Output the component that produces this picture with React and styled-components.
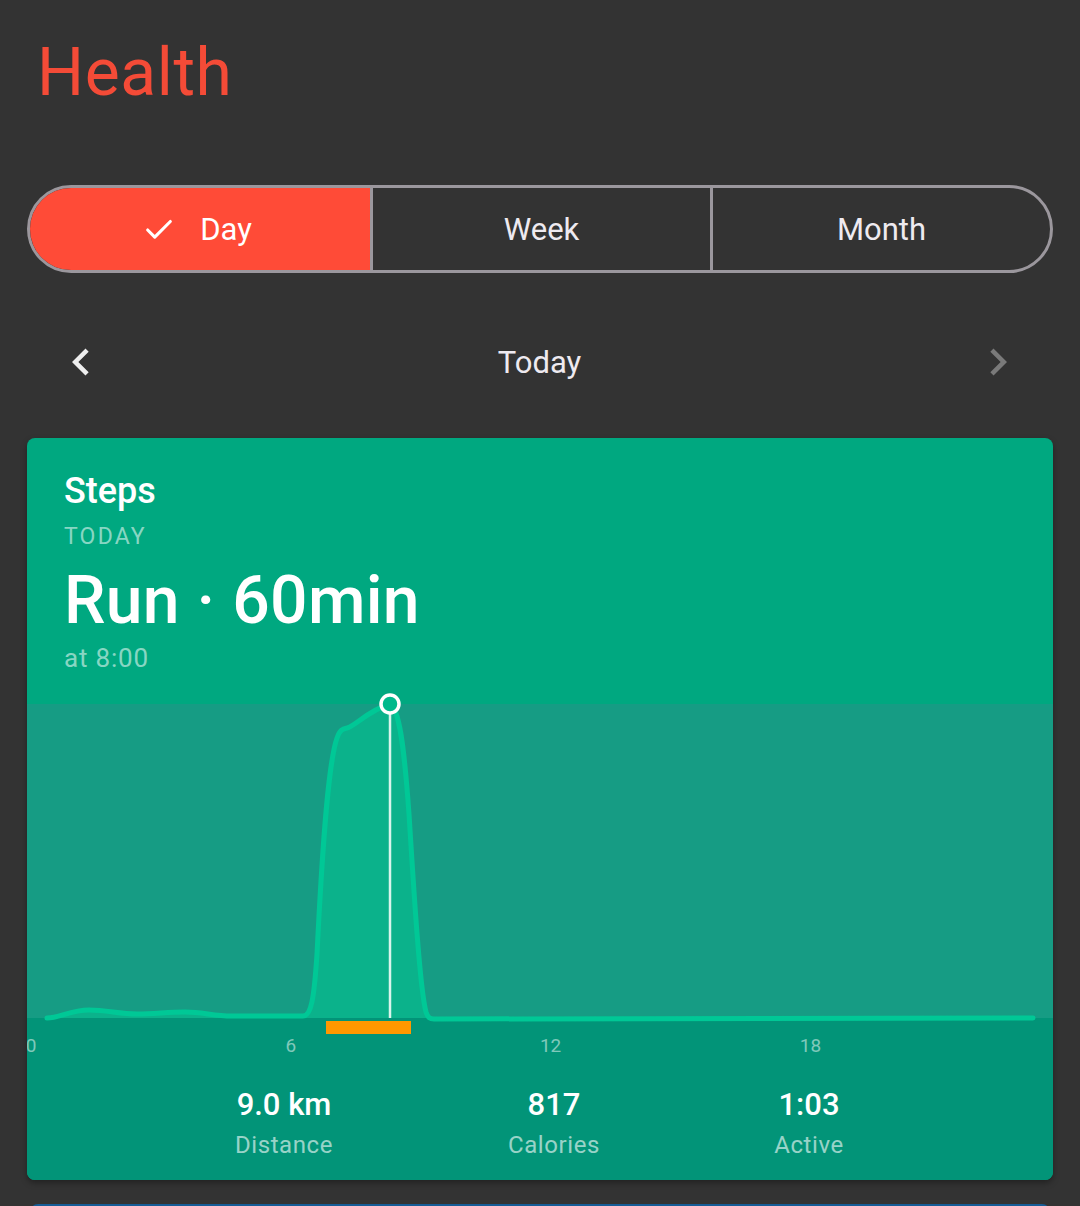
import React, { useState } from 'react'
import styled, { createGlobalStyle } from 'styled-components'
import { Check } from 'lucide-react'

const GlobalStyle = createGlobalStyle`
    body {
        margin: 0;
        background: #333333;
        font-family: Roboto, "Noto Sans", sans-serif;
        color: #eeeeee;
    }
`

const ranges = ['Day', 'Week', 'Month']
const hours = [0, 6, 12, 18]
const stats = [
    { value: '9.0 km', label: 'Distance' },
    { value: '817', label: 'Calories' },
    { value: '1:03', label: 'Active' },
]

// chart path in local chart coords (card width 1026, chart height 314)
const curve =
    'M20,314 C32,314 44,306 62,306 C80,306 92,310 110,310 C128,310 140,308 158,308 ' +
    'C176,308 186,312 205,312 L276,312 C284,312 287,296 290,250 C294,170 300,62 310,34 ' +
    'C313,26 315,25 320,24 C328,22 342,6 363,0 C372,4 377,40 382,110 ' +
    'C387,190 393,286 399,308 C401,314 403,315 407,315 L1006,314'

function Chevron({ dir, color }) {
    return (
        <svg width='54' height='54' viewBox='0 0 24 24'>
            <path
                fill={color}
                d={dir === 'left'
                    ? 'M15.41 7.41L14 6l-6 6 6 6 1.41-1.41L10.83 12z'
                    : 'M8.59 16.59L10 18l6-6-6-6-1.41 1.41L13.17 12z'}
            />
        </svg>
    )
}

function App() {
    const [active, setActive] = useState('Day')

    return (
        <Page>
            <GlobalStyle />
            <Title>Health</Title>
            <Segmented>
                {ranges.map((r) => (
                    <Segment key={r} $active={active === r} onClick={() => setActive(r)}>
                        {active === r && <Check size={34} strokeWidth={2.2} />}
                        <span>{r}</span>
                    </Segment>
                ))}
            </Segmented>
            <DateNav>
                <NavButton><Chevron dir='left' color='#eeeeee' /></NavButton>
                <DateLabel>Today</DateLabel>
                <NavButton><Chevron dir='right' color='#7a7a7a' /></NavButton>
            </DateNav>

            <Card>
                <CardHead>
                    <CardTitle>Steps</CardTitle>
                    <Overline>TODAY</Overline>
                    <Headline>Run · 60min</Headline>
                    <Sub>at 8:00</Sub>
                </CardHead>
                <ChartArea>
                    <svg width='1026' height='314' viewBox='0 0 1026 314' overflow='visible'>
                        <path d={curve + ' L20,314 Z'} fill='#0bb28b' />
                        <path d={curve} fill='none' stroke='#00c896' strokeWidth='5' strokeLinecap='round' />
                        <rect x='299' y='317' width='85' height='13' fill='#ff9800' />
                        <line x1='363' y1='8' x2='363' y2='314' stroke='#d8f5ec' strokeWidth='2.5' />
                        <circle cx='363' cy='0' r='9' fill='#00b98c' stroke='#ffffff' strokeWidth='3.5' />
                    </svg>
                </ChartArea>
                <Bottom>
                    <Axis>
                        {hours.map((h) => (
                            <Tick key={h} style={{ left: 4 + h * 43.3 }}>{h}</Tick>
                        ))}
                    </Axis>
                    <Stats>
                        {stats.map((s) => (
                            <Stat key={s.label}>
                                <StatValue>{s.value}</StatValue>
                                <StatLabel>{s.label}</StatLabel>
                            </Stat>
                        ))}
                    </Stats>
                </Bottom>
            </Card>
            <NextCard />
        </Page>
    )
}

const Page = styled.div`
    padding: 41px 27px 0;
    overflow: hidden;
`

const Title = styled.h1`
    margin: 0 0 0 10px;
    font-size: 66px;
    line-height: 64px;
    font-weight: 400;
    letter-spacing: 0.6px;
    color: #f44b37;
`

const Segmented = styled.div`
    margin-top: 80px;
    height: 88px;
    box-sizing: border-box;
    border: 3px solid #9b979d;
    border-radius: 44px;
    overflow: hidden;
    display: grid;
    grid-template-columns: 1fr 1fr 1fr;
`

const Segment = styled.button`
    border: none;
    border-left: 3px solid #9b979d;
    background: ${(p) => (p.$active ? '#ff4b37' : 'transparent')};
    color: ${(p) => (p.$active ? '#ffffff' : '#eeeaf0')};
    font-family: inherit;
    font-size: 31px;
    display: flex;
    align-items: center;
    justify-content: center;
    gap: 24px;
    padding: 0;
    cursor: pointer;
    &:first-child {
        border-left: none;
        padding-right: 6px;
    }
    svg {
        margin-top: 2px;
    }
`

const DateNav = styled.div`
    margin-top: 44px;
    height: 90px;
    display: grid;
    grid-template-columns: 54px 1fr 54px;
    align-items: center;
    padding: 0 28px 0 27px;
`

const NavButton = styled.div`
    display: flex;
    align-items: center;
    justify-content: center;
`

const DateLabel = styled.div`
    text-align: center;
    font-size: 31px;
    color: #eeeaf0;
`

const Card = styled.div`
    margin-top: 31px;
    border-radius: 8px;
    overflow: hidden;
    background: #00a880;
    box-shadow: 0 3px 6px rgba(0, 0, 0, 0.35);
`

const CardHead = styled.div`
    padding: 35px 37px 33px;
    display: flex;
    flex-direction: column;
    color: #ffffff;
`

const CardTitle = styled.div`
    font-size: 36px;
    line-height: 36px;
    font-weight: 500;
`

const Overline = styled.div`
    margin-top: 16px;
    font-size: 23px;
    line-height: 24px;
    letter-spacing: 2.2px;
    color: rgba(255, 255, 255, 0.55);
`

const Headline = styled.div`
    margin-top: 20px;
    font-size: 66px;
    line-height: 64px;
    font-weight: 500;
    letter-spacing: 0.3px;
`

const Sub = styled.div`
    margin-top: 12px;
    font-size: 26px;
    line-height: 26px;
    letter-spacing: 0.8px;
    color: rgba(255, 255, 255, 0.55);
`

const ChartArea = styled.div`
    height: 314px;
    background: #169c84;
    position: relative;
    z-index: 1;
    svg {
        display: block;
    }
`

const Bottom = styled.div`
    background: #029478;
    padding-bottom: 23px;
`

const Axis = styled.div`
    position: relative;
    height: 38px;
`

const Tick = styled.span`
    position: absolute;
    top: 18px;
    transform: translateX(-50%);
    font-size: 19px;
    line-height: 20px;
    color: rgba(255, 255, 255, 0.5);
`

const Stats = styled.div`
    margin-top: 33px;
    padding-left: 126px;
    display: grid;
    grid-template-columns: 262px 278px 232px;
`

const Stat = styled.div`
    display: flex;
    flex-direction: column;
    align-items: center;
`

const StatValue = styled.div`
    font-size: 31px;
    line-height: 31px;
    font-weight: 500;
    color: #ffffff;
`

const StatLabel = styled.div`
    margin-top: 13px;
    font-size: 24px;
    line-height: 24px;
    letter-spacing: 0.6px;
    color: rgba(255, 255, 255, 0.6);
`

const NextCard = styled.div`
    margin: 24px 3px 0;
    height: 40px;
    border-radius: 8px 8px 0 0;
    background: #165c96;
`

export default App
